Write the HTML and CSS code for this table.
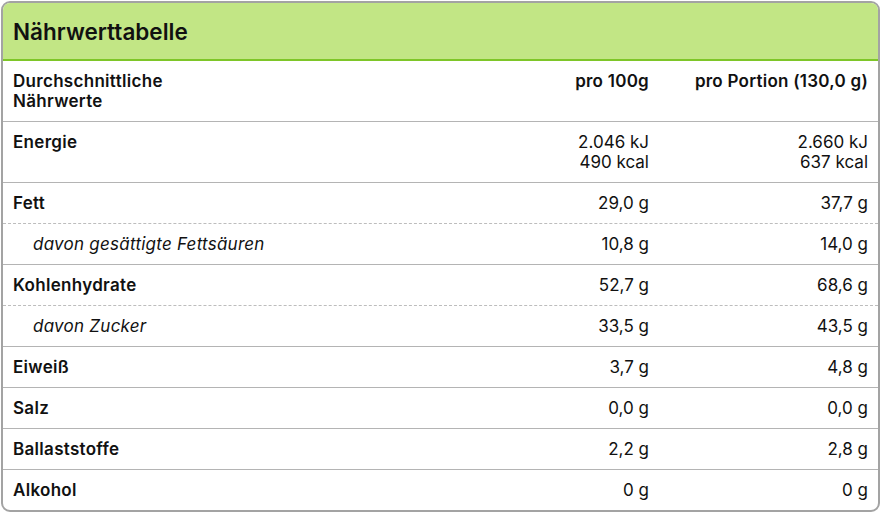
FILE: index.html
```html
<!DOCTYPE html>
<html lang="de">
<head>
<meta charset="utf-8">
<title>Nährwerttabelle</title>
<link rel="stylesheet" href="styles.css">
</head>
<body>
<div class="card">
  <div class="title">Nährwerttabelle</div>
  <div class="row head">
    <div class="name">Durchschnittliche<br>Nährwerte</div>
    <div class="val">pro 100g</div>
    <div class="val">pro Portion (130,0 g)</div>
  </div>
  <div class="row">
    <div class="name">Energie</div>
    <div class="val num">2.046 kJ<br>490 kcal</div>
    <div class="val num">2.660 kJ<br>637 kcal</div>
  </div>
  <div class="row dashed">
    <div class="name">Fett</div>
    <div class="val num">29,0 g</div>
    <div class="val num">37,7 g</div>
  </div>
  <div class="row sub">
    <div class="name">davon gesättigte Fettsäuren</div>
    <div class="val num">10,8 g</div>
    <div class="val num">14,0 g</div>
  </div>
  <div class="row dashed">
    <div class="name">Kohlenhydrate</div>
    <div class="val num">52,7 g</div>
    <div class="val num">68,6 g</div>
  </div>
  <div class="row sub">
    <div class="name">davon Zucker</div>
    <div class="val num">33,5 g</div>
    <div class="val num">43,5 g</div>
  </div>
  <div class="row">
    <div class="name">Eiweiß</div>
    <div class="val num">3,7 g</div>
    <div class="val num">4,8 g</div>
  </div>
  <div class="row">
    <div class="name">Salz</div>
    <div class="val num">0,0 g</div>
    <div class="val num">0,0 g</div>
  </div>
  <div class="row">
    <div class="name">Ballaststoffe</div>
    <div class="val num">2,2 g</div>
    <div class="val num">2,8 g</div>
  </div>
  <div class="row last">
    <div class="name">Alkohol</div>
    <div class="val num">0 g</div>
    <div class="val num">0 g</div>
  </div>
</div>
</body>
</html>
```
FILE: styles.css
```css
html, body {
  margin: 0;
  padding: 0;
  background: #ffffff;
}
body {
  padding: 1px 0 0 1px;
  font-family: Inter, "Noto Sans", sans-serif;
  color: #111111;
}
.card {
  width: 875px;
  border: 2px solid #a3a3a3;
  border-radius: 9px;
  overflow: hidden;
}
.title {
  background: #c2e685;
  border-bottom: 2px solid #7ec628;
  padding: 15px 10px 13px;
  font-size: 22.5px;
  line-height: 28px;
  font-weight: 600;
}
.row {
  display: grid;
  grid-template-columns: 1fr 210px 219px;
  border-bottom: 1px solid #b4b4b4;
  font-size: 17px;
  line-height: 20px;
}
.row.dashed {
  border-bottom: 1px dashed #bdbdbd;
}
.row.last {
  border-bottom: none;
}
.row > div {
  padding: 10px 10px;
}
.name {
  font-weight: 600;
  letter-spacing: 0.3px;
}
.head .val {
  font-weight: 600;
  letter-spacing: 0.25px;
  text-align: right;
}
.val {
  text-align: right;
}
.sub .name {
  font-weight: 400;
  font-style: italic;
  letter-spacing: 0.25px;
  padding-left: 30px;
}
```
